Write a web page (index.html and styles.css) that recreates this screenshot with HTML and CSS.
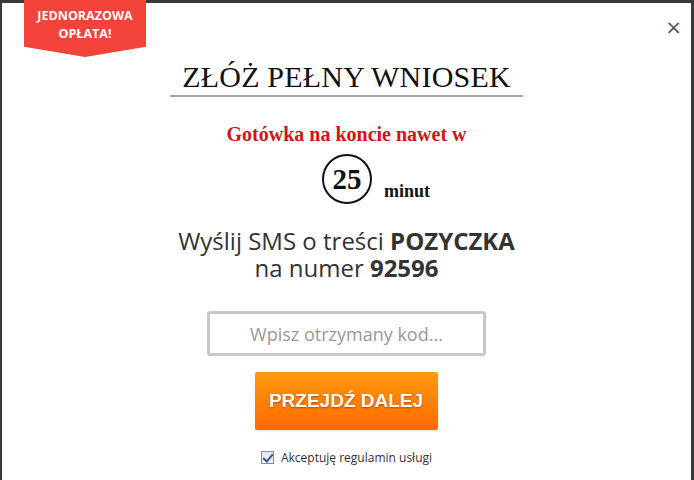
FILE: index.html
```html
<!DOCTYPE html>
<html lang="pl">
<head>
<meta charset="utf-8">
<title>Złóż pełny wniosek</title>
<link rel="stylesheet" href="styles.css">
</head>
<body>
<div class="modal">
  <div class="ribbon">JEDNORAZOWA<br>OPŁATA!</div>
  <a class="close" href="#">&#215;</a>

  <h1 class="title">ZŁÓŻ PEŁNY WNIOSEK</h1>

  <p class="promo">Gotówka na koncie nawet w</p>
  <div class="timer">
    <span class="circle">25</span>
    <span class="unit">minut</span>
  </div>

  <p class="sms"><span>Wyślij SMS o treści <b>POZYCZKA</b></span><span>na numer <b>92596</b></span></p>

  <form class="code-form">
    <input class="code" type="text" placeholder="Wpisz otrzymany kod...">
    <button class="go" type="button">PRZEJDŹ DALEJ</button>
    <label class="terms"><input type="checkbox" checked> Akceptuję regulamin usługi</label>
  </form>
</div>
</body>
</html>
```

FILE: styles.css
```css
/* Popup: SMS code form */

html, body
{ margin: 0;
height: 100%;
}

body
{ background-color: #3a3a3a;
padding: 3px 3px 0 2px;
box-sizing: border-box;
}

div.modal
{ position: relative;
background-color: #fff;
height: 100%;
display: flex;
flex-direction: column;
align-items: center;
font-family: "Open Sans", sans-serif;
color: #333;
}

div.ribbon
{ position: absolute;
left: 22px; top: -3px;
width: 122px;
height: 57px;
box-sizing: border-box;
padding-top: 7px;
background-color: #f4433a;
color: #fff;
font-size: 12.5px;
font-weight: bold;
line-height: 18px;
text-align: center;
clip-path: polygon(0 0, 100% 0, 100% 82%, 50% 100%, 0 82%);
}

a.close
{ position: absolute;
right: 9px; top: 12px;
color: #555;
font-family: "DejaVu Sans", sans-serif;
font-size: 20px;
text-decoration: none;
}

h1.title
{ margin: 57px 0 0;
padding: 0 12px 1px;
border-bottom: 2px solid #a8a8a8;
font-family: "Liberation Serif", serif;
font-size: 30px;
font-weight: normal;
color: #111;
letter-spacing: 0.2px;
}

p.promo
{ margin: 26px 0 0;
font-family: "Liberation Serif", serif;
font-size: 20px;
font-weight: bold;
color: #d41414;
}

div.timer
{ display: flex;
align-items: flex-end;
gap: 12px;
margin: 8px 0 0 59px;
}

span.circle
{ width: 46px; height: 46px;
border: 2px solid #111;
border-radius: 50%;
display: flex;
align-items: center;
justify-content: center;
font-family: "Liberation Serif", serif;
font-size: 29px;
font-weight: bold;
color: #111;
}

span.unit
{ font-family: "Liberation Serif", serif;
font-size: 18px;
font-weight: bold;
color: #111;
padding-bottom: 2px;
}

p.sms
{ margin: 23px 0 0;
display: flex;
flex-direction: column;
align-items: center;
font-size: 24px;
line-height: 27px;
color: #333;
}

form.code-form
{ display: flex;
flex-direction: column;
align-items: center;
margin-top: 30px;
}

input.code
{ width: 279px; height: 45px;
box-sizing: border-box;
border: 3px solid #c8c8c8;
border-radius: 3px;
font-family: "Open Sans", sans-serif;
font-size: 18px;
text-align: center;
color: #333;
outline: none;
}

input.code::placeholder
{ color: #999;
}

button.go
{ margin: 16px 0 0 -1px;
width: 183px; height: 58px;
border: none;
border-radius: 2px;
background: linear-gradient(#ff9a10, #ff6a00);
color: #fff;
font-family: "Liberation Sans", sans-serif;
font-size: 19px;
font-weight: bold;
text-shadow: 0 1px 2px rgba(120, 40, 0, 0.6);
box-shadow: 0 1px 2px rgba(0, 0, 0, 0.15);
}

label.terms
{ margin-top: 19px;
display: flex;
align-items: center;
gap: 3px;
font-size: 12px;
color: #333;
}

/* old-style checkbox: grey frame, blue tick */
label.terms input
{ appearance: none;
margin: 0 4px 0 0;
width: 13px; height: 13px;
border: 1px solid #8a8a9a;
background: linear-gradient(#e4e4ee, #fbfbfd);
position: relative;
}

label.terms input:checked::after
{ content: "";
position: absolute;
left: 3px; top: 0;
width: 4px; height: 8px;
border: solid #3b4fa0;
border-width: 0 2px 2px 0;
transform: rotate(40deg);
}
```
